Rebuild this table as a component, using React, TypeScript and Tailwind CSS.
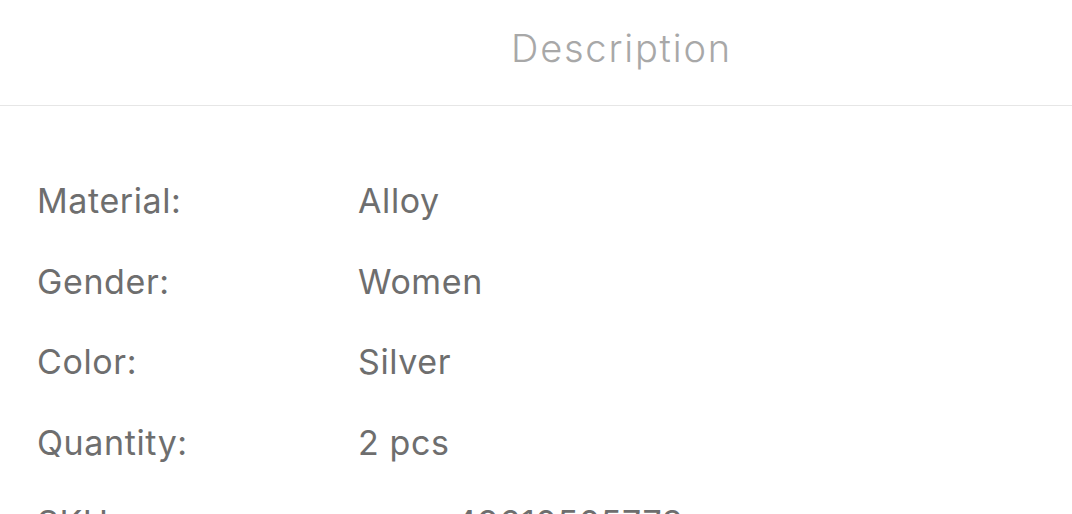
const specs = [
  { label: 'Material:', value: 'Alloy' },
  { label: 'Gender:', value: 'Women' },
  { label: 'Color:', value: 'Silver' },
  { label: 'Quantity:', value: '2 pcs' },
  { label: 'SKU:', value: '49610505773', offset: true },
]

export default function App() {
  return (
    <div className="h-[514px] w-full overflow-hidden bg-white font-['Inter',sans-serif]">
      <div className="flex h-[106px] items-center border-b border-[#e6e6e6] pb-[8px] pl-[511px]">
        <span className="text-[38px] font-light tracking-[1.8px] text-[#a8a8a8]">Description</span>
      </div>

      <div className="pt-[55px]">
        {specs.map((s) => (
          <div
            key={s.label}
            className="flex h-[80.5px] items-center text-[34px] leading-[80.5px] tracking-[0.6px] text-[#6e6e6e]"
          >
            <span className="w-[358px] shrink-0 pl-[37px]">{s.label}</span>
            <span className={s.offset ? 'pl-[97px]' : ''}>{s.value}</span>
          </div>
        ))}
      </div>
    </div>
  )
}
